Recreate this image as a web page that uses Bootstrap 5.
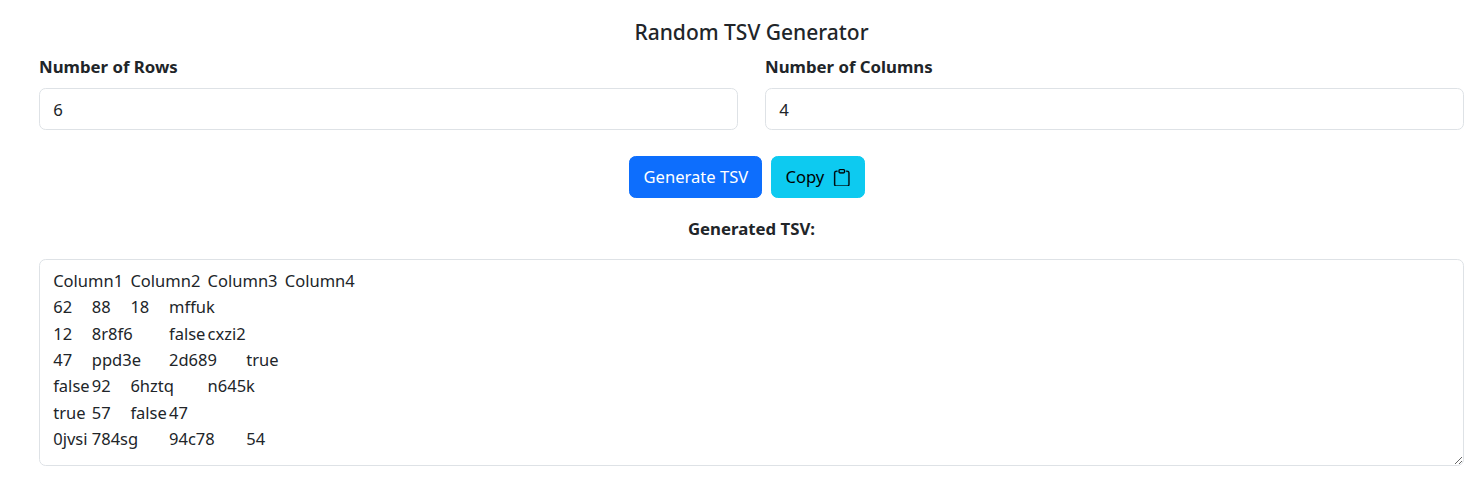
<!DOCTYPE html>
<html lang="en">
<head>
<meta charset="utf-8">
<title>Random TSV Generator</title>
<link href="https://cdn.jsdelivr.net/npm/bootstrap@5.3.0/dist/css/bootstrap.min.css" rel="stylesheet">
<style>
html { font-size: 17.6px; }
body { font-family: "Noto Sans", "Liberation Sans", sans-serif; font-size: 16.8px; line-height: 26.4px; color: #212529; background: #fff; overflow: hidden; }
.tsv-page { padding: 16px 14px 0 39px; }
.tsv-title { font-size: 21px; font-weight: 500; line-height: 32px; margin: 0 0 6px; }
.tsv-fields { column-gap: 27px; }
.tsv-fields > div { flex: 1 1 0; }
.tsv-label { font-weight: 700; font-size: 16.8px; line-height: 26.4px; margin-bottom: 8px; display: block; }
.tsv-input { height: 42px; font-size: 16.8px; line-height: 26.4px; }
.tsv-actions { margin-top: 26px; }
.tsv-btn { height: 42px; font-size: 16.6px; line-height: 26.4px; }
.tsv-sub { font-weight: 700; font-size: 16.8px; line-height: 26.4px; margin: 18px 0 16px; }
.tsv-area { height: 207px; font-size: 16.5px; line-height: 26.4px; padding-top: 8px; tab-size: 38.6px; white-space: pre; font-family: inherit; }
.tsv-icon { flex: none; fill: #000; stroke: #000; stroke-width: .25; }
</style>
</head>
<body>
<div class="tsv-page">
<h1 class="tsv-title text-center">Random TSV Generator</h1>
<div class="d-flex tsv-fields">
<div><label class="tsv-label" for="r">Number of Rows</label><input id="r" class="form-control tsv-input" type="number" value="6"></div>
<div><label class="tsv-label" for="c">Number of Columns</label><input id="c" class="form-control tsv-input" type="number" value="4"></div>
</div>
<div class="d-flex justify-content-center tsv-actions">
<button class="btn btn-primary tsv-btn me-2">Generate TSV</button>
<button class="btn btn-info tsv-btn me-2 d-flex align-items-center gap-2">Copy
<svg class="tsv-icon" width="17.6" height="17.6" viewBox="0 0 16 16"><path d="M4 1.5H3a2 2 0 0 0-2 2V14a2 2 0 0 0 2 2h10a2 2 0 0 0 2-2V3.5a2 2 0 0 0-2-2h-1v1h1a1 1 0 0 1 1 1V14a1 1 0 0 1-1 1H3a1 1 0 0 1-1-1V3.5a1 1 0 0 1 1-1h1v-1z"/><path d="M9.5 1a.5.5 0 0 1 .5.5v1a.5.5 0 0 1-.5.5h-3a.5.5 0 0 1-.5-.5v-1a.5.5 0 0 1 .5-.5h3zm-3-1A1.5 1.5 0 0 0 5 1.5v1A1.5 1.5 0 0 0 6.5 4h3A1.5 1.5 0 0 0 11 2.5v-1A1.5 1.5 0 0 0 9.5 0h-3z"/></svg></button>
</div>
<div class="tsv-sub text-center">Generated TSV:</div>
<textarea class="form-control tsv-area" readonly>Column1	Column2	Column3	Column4
62	88	18	mffuk
12	8r8f6	false	cxzi2
47	ppd3e	2d689	true
false	92	6hztq	n645k
true	57	false	47
0jvsi	784sg	94c78	54</textarea>
</div>
<script src="https://cdn.jsdelivr.net/npm/bootstrap@5.3.0/dist/js/bootstrap.bundle.min.js"></script>
</body>
</html>
